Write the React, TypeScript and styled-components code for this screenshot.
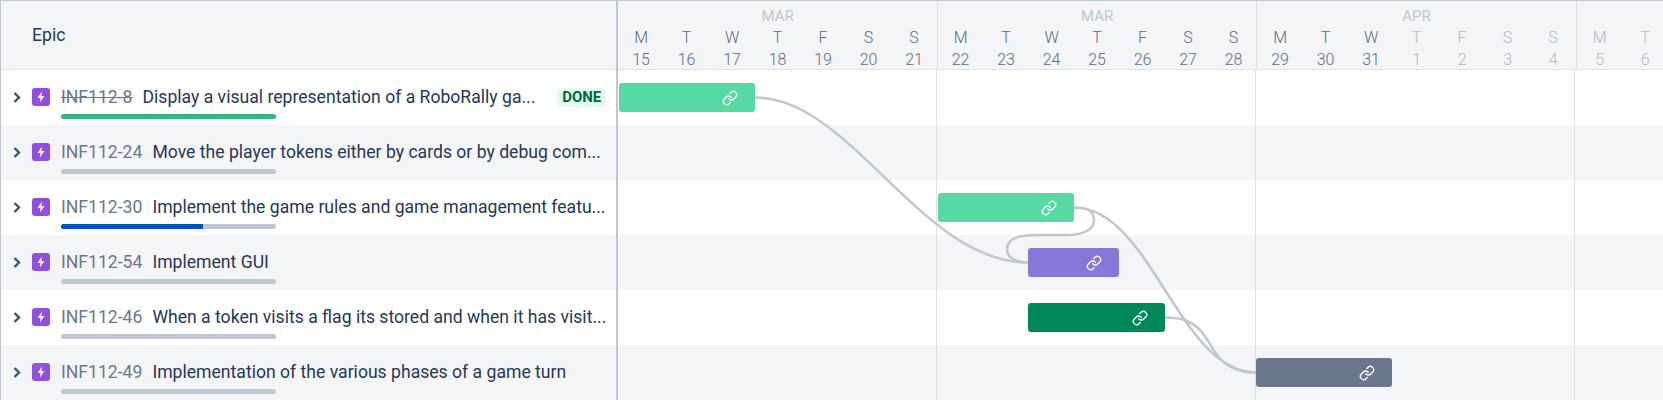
import React from 'react';
import styled, { createGlobalStyle } from 'styled-components';
import { Link } from 'lucide-react';

const GlobalStyle = createGlobalStyle`
  html, body {
    margin: 0;
    padding: 0;
    background: #fff;
  }
  * {
    box-sizing: border-box;
  }
`;

type Epic = {
  id: string;
  title: string;
  done?: boolean;
  progress?: { value: number; color: string };
};

type Bar = { start: number; width: number; color: string };

const epics: Epic[] = [
  {
    id: 'INF112-8',
    title: 'Display a visual representation of a RoboRally ga...',
    done: true,
    progress: { value: 100, color: '#36B37E' },
  },
  { id: 'INF112-24', title: 'Move the player tokens either by cards or by debug com...' },
  {
    id: 'INF112-30',
    title: 'Implement the game rules and game management featu...',
    progress: { value: 66, color: '#0052CC' },
  },
  { id: 'INF112-54', title: 'Implement GUI' },
  { id: 'INF112-46', title: 'When a token visits a flag its stored and when it has visit...' },
  { id: 'INF112-49', title: 'Implementation of the various phases of a game turn' },
];

const bars: Bar[] = [
  { start: 1, width: 136, color: '#57D9A3' },
  { start: -1, width: 0, color: '' },
  { start: 320, width: 136, color: '#57D9A3' },
  { start: 410, width: 91, color: '#8777D9' },
  { start: 410, width: 137, color: '#00875A' },
  { start: 638, width: 136, color: '#6B778C' },
];

const weeks = [
  {
    month: 'MAR',
    days: [['M', '15'], ['T', '16'], ['W', '17'], ['T', '18'], ['F', '19'], ['S', '20'], ['S', '21']],
    dimFrom: 7,
  },
  {
    month: 'MAR',
    days: [['M', '22'], ['T', '23'], ['W', '24'], ['T', '25'], ['F', '26'], ['S', '27'], ['S', '28']],
    dimFrom: 7,
  },
  {
    month: 'APR',
    days: [['M', '29'], ['T', '30'], ['W', '31'], ['T', '1'], ['F', '2'], ['S', '3'], ['S', '4']],
    dimFrom: 3,
  },
  {
    month: '',
    days: [['M', '5'], ['T', '6']],
    dimFrom: 0,
  },
];

// coordinates are relative to the top left of the timeline rows
const connectors = [
  'M137 27.5 C233 27.5 303 192.5 410 192.5',
  'M456 137.5 C468 137.5 476 140 476 150 C476 160 465 165 448 165 L418 165 C398 165 389 170 389 179 C389 188 398 192.5 410 192.5',
  'M456 137.5 C533 137.5 561 302.5 638 302.5',
  'M547 247.5 C562 247.5 572 250 582 260 C596 274 598 302.5 638 302.5',
];

const ChevronIcon = () => (
  <svg width="8" height="11" viewBox="0 0 8 11">
    <polyline points="1.5,1 6,5.5 1.5,10" fill="none" stroke="#42526E" strokeWidth="2.4" />
  </svg>
);

const EpicIcon = () => (
  <svg width="18" height="18" viewBox="0 0 18 18">
    <rect width="18" height="18" rx="3" fill="#904EE2" />
    <path d="M9.8 3.6 L5.6 9.9 H8.5 L8 14.4 L12.4 8 H9.4 Z" fill="#fff" />
  </svg>
);

const App = (): JSX.Element => (
  <>
    <GlobalStyle />
    <Roadmap>
      <LeftPanel>
        <LeftHeader>Epic</LeftHeader>
        {epics.map((epic, i) => (
          <EpicRow key={epic.id} $striped={i % 2 === 1}>
            <Chevron>
              <ChevronIcon />
            </Chevron>
            <IconBox>
              <EpicIcon />
            </IconBox>
            <EpicContent>
              <TitleLine>
                <EpicId $done={epic.done}>{epic.id}</EpicId>
                <EpicTitle>{epic.title}</EpicTitle>
                {epic.done && <Lozenge>DONE</Lozenge>}
              </TitleLine>
              <ProgressTrack>
                {epic.progress && (
                  <ProgressFill
                    $color={epic.progress.color}
                    style={{ width: `${epic.progress.value}%` }}
                  />
                )}
              </ProgressTrack>
            </EpicContent>
          </EpicRow>
        ))}
      </LeftPanel>
      <Timeline>
        <TimelineHeader>
          {weeks.map((week, w) => (
            <WeekHead key={w}>
              <Month>{week.month}</Month>
              <DayGrid>
                {week.days.map(([day, date], d) => (
                  <DayCell key={d} $dim={d >= week.dimFrom}>
                    <span>{day}</span>
                    <span>{date}</span>
                  </DayCell>
                ))}
              </DayGrid>
            </WeekHead>
          ))}
        </TimelineHeader>
        <TimelineBody>
          <Connectors width="1046" height="330">
            {connectors.map((d) => (
              <path key={d} d={d} fill="none" stroke="#C1C7D0" strokeWidth="2.5" />
            ))}
          </Connectors>
          {bars.map((bar, i) => (
            <TimelineRow key={i} $striped={i % 2 === 1}>
              {bar.width > 0 && (
                <GanttBar $color={bar.color} $start={bar.start} $width={bar.width}>
                  <Link size={16} color="#fff" strokeWidth={2} />
                </GanttBar>
              )}
            </TimelineRow>
          ))}
        </TimelineBody>
      </Timeline>
    </Roadmap>
  </>
);

export default App;

const Roadmap = styled.div`
  display: flex;
  width: 1663px;
  height: 400px;
  overflow: hidden;
  font-family: 'Roboto', 'Liberation Sans', sans-serif;
  font-size: 17.6px;
  color: #253858;
  border-top: 1px solid #c1c7d0;
`;
const LeftPanel = styled.div`
  flex: 0 0 617px;
  border-left: 1px solid #c1c7d0;
  border-right: 2px solid #c1c7d0;
`;
const LeftHeader = styled.div`
  height: 69px;
  padding: 24px 0 0 31px;
  line-height: 20px;
  background: #f4f5f7;
  border-bottom: 1px solid #dfe1e6;
`;
const EpicRow = styled.div<{ $striped: boolean }>`
  display: flex;
  height: 55px;
  padding: 17px 10px 0 12px;
  background: ${(p) => (p.$striped ? '#f4f5f7' : '#fff')};
`;
const Chevron = styled.div`
  width: 19px;
  padding-top: 5px;
  line-height: 0;
`;
const IconBox = styled.div`
  width: 29px;
  padding-top: 1px;
  line-height: 0;
`;
const EpicContent = styled.div`
  flex: 1;
  min-width: 0;
`;
const TitleLine = styled.div`
  display: flex;
  align-items: center;
  height: 20px;
  white-space: nowrap;
`;
const EpicId = styled.span<{ $done?: boolean }>`
  margin-right: 10px;
  color: #6b778c;
  text-decoration: ${(p) => (p.$done ? 'line-through' : 'none')};
`;
const EpicTitle = styled.span`
  overflow: hidden;
`;
const Lozenge = styled.span`
  margin-left: auto;
  padding: 0 5px;
  height: 19px;
  line-height: 18px;
  border-radius: 3px;
  background: #e3fcef;
  color: #006644;
  font-size: 15px;
  font-weight: 700;
`;
const ProgressTrack = styled.div`
  width: 215px;
  height: 5px;
  margin-top: 7px;
  border-radius: 3px;
  background: #c1c7d0;
  overflow: hidden;
`;
const ProgressFill = styled.div<{ $color: string }>`
  height: 100%;
  background: ${(p) => p.$color};
`;
const Timeline = styled.div`
  flex: 1;
  min-width: 0;
  overflow: hidden;
`;
const TimelineHeader = styled.div`
  display: flex;
  width: 1280px;
  height: 69px;
  background: #f4f5f7;
  border-bottom: 1px solid #dfe1e6;
`;
const WeekHead = styled.div`
  flex: 0 0 319px;
  text-align: center;
  border-right: 1px solid #dfe1e6;
`;
const Month = styled.div`
  height: 22px;
  padding-top: 5px;
  font-size: 15px;
  line-height: 20px;
  color: #c1c7d0;
`;
const DayGrid = styled.div`
  display: grid;
  grid-template-columns: repeat(7, 45.5px);
  margin-top: 4px;
`;
const DayCell = styled.div<{ $dim: boolean }>`
  display: flex;
  flex-direction: column;
  line-height: 21.5px;
  font-size: 16px;
  font-weight: 300;
  color: ${(p) => (p.$dim ? '#b3bac5' : '#5e6c84')};
`;
const TimelineBody = styled.div`
  position: relative;
`;
const Connectors = styled.svg`
  position: absolute;
  top: 0;
  left: 0;
  z-index: 1;
  pointer-events: none;
`;
const TimelineRow = styled.div<{ $striped: boolean }>`
  display: flex;
  align-items: center;
  height: 55px;
  background-color: ${(p) => (p.$striped ? '#f4f5f7' : '#fff')};
  background-image: repeating-linear-gradient(
    to right,
    transparent 0,
    transparent 318px,
    #dfe1e6 318px,
    #dfe1e6 319px
  );
`;
const GanttBar = styled.div<{ $color: string; $start: number; $width: number }>`
  position: relative;
  z-index: 2;
  display: flex;
  align-items: center;
  justify-content: flex-end;
  width: ${(p) => p.$width}px;
  height: 29px;
  margin-left: ${(p) => p.$start}px;
  padding-right: 17px;
  border-radius: 3px;
  background: ${(p) => p.$color};
`;
